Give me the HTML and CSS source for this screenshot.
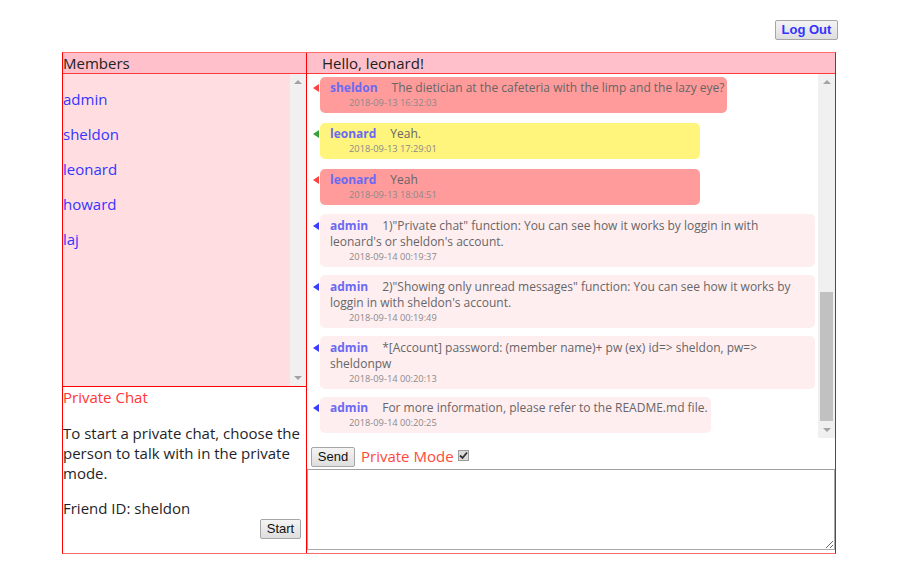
FILE: index.html
```html
<!DOCTYPE html>
<html>
<head>
<meta charset="utf-8">
<link rel="stylesheet" href="styles.css">
</head>
<body>
<div class="page">
  <div class="topbar">
    <button class="btn logout">Log Out</button>
  </div>
  <div class="frame">
    <div class="leftcol">
      <div class="colhead members-head">Members</div>
      <div class="members">
        <ul class="member-list">
          <li><a href="#">admin</a></li>
          <li><a href="#">sheldon</a></li>
          <li><a href="#">leonard</a></li>
          <li><a href="#">howard</a></li>
          <li><a href="#">laj</a></li>
        </ul>
        <div class="scrollbar">
          <span class="arr up"></span>
          <span class="arr down"></span>
        </div>
      </div>
      <div class="private">
        <div class="private-title">Private Chat</div>
        <p class="private-text">To start a private chat, choose the person to talk with in the private mode.</p>
        <div class="friend">Friend ID: sheldon</div>
        <div class="start-row"><button class="btn">Start</button></div>
      </div>
    </div>
    <div class="rightcol">
      <div class="colhead hello">Hello, leonard!</div>
      <div class="chat">
        <div class="messages">
          <div class="msg red"><div class="body"><b class="name">sheldon</b>The dietician at the cafeteria with the limp and the lazy eye?</div><div class="time">2018-09-13 16:32:03</div></div>
          <div class="msg yellow"><div class="body"><b class="name">leonard</b>Yeah.</div><div class="time">2018-09-13 17:29:01</div></div>
          <div class="msg red last"><div class="body"><b class="name">leonard</b>Yeah</div><div class="time">2018-09-13 18:04:51</div></div>
          <div class="msg admin wide"><div class="body"><b class="name">admin</b>1)"Private chat" function: You can see how it works by loggin in with<br>leonard's or sheldon's account.</div><div class="time">2018-09-14 00:19:37</div></div>
          <div class="msg admin wide"><div class="body"><b class="name">admin</b>2)"Showing only unread messages" function: You can see how it works by<br>loggin in with sheldon's account.</div><div class="time">2018-09-14 00:19:49</div></div>
          <div class="msg admin wide"><div class="body"><b class="name">admin</b>*[Account] password: (member name)+ pw (ex) id=&gt; sheldon, pw=&gt;<br>sheldonpw</div><div class="time">2018-09-14 00:20:13</div></div>
          <div class="msg admin single"><div class="body"><b class="name">admin</b>For more information, please refer to the README.md file.</div><div class="time">2018-09-14 00:20:25</div></div>
        </div>
        <div class="scrollbar chat-scroll">
          <span class="arr up"></span>
          <span class="thumb"></span>
          <span class="arr down"></span>
        </div>
      </div>
      <div class="controls">
        <button class="btn">Send</button>
        <span class="pm">Private Mode</span>
        <span class="check"><svg width="9" height="9" viewBox="0 0 9 9"><path d="M1 4.5 L3.5 7 L8 1.5" fill="none" stroke="#333" stroke-width="1.8"/></svg></span>
      </div>
      <textarea class="input"></textarea>
    </div>
  </div>
</div>
</body>
</html>
```
FILE: styles.css
```css
* { box-sizing: border-box; }
body {
  margin: 0;
  background: #fff;
  font-family: "Open Sans", "Noto Sans", sans-serif;
  color: #222;
}
.page {
  padding: 20px 0 0 62px;
  width: 837px;
}
.topbar {
  display: flex;
  justify-content: flex-end;
  height: 20px;
  margin-bottom: 12px;
}
.btn {
  font-family: "Liberation Sans", Arial, sans-serif;
  font-size: 13px;
  color: #111;
  background: linear-gradient(#f4f4f4, #dedede);
  border: 1px solid #a6a6a6;
  border-radius: 2px;
  height: 20px;
  padding: 0 6px;
  line-height: 18px;
  margin: 0;
}
.logout {
  font-weight: bold;
  color: #3333ff;
  width: 63px;
  padding: 0;
  margin-right: -1px;
}
.frame {
  display: flex;
  width: 774px;
  height: 502px;
  border: 1px solid #ff0000;
  border-top-color: #ff6b6b;
  border-bottom-color: #ff6b6b;
}
.leftcol {
  width: 244px;
  border-right: 1px solid #ff0000;
  display: flex;
  flex-direction: column;
}
.rightcol {
  flex: 1;
  display: flex;
  flex-direction: column;
}
.colhead {
  height: 21px;
  background: #ffc0cb;
  border-bottom: 1px solid #ff3b3b;
  font-size: 15px;
  line-height: 20px;
  color: #222;
}
.members-head { padding-left: 0; }
.hello { padding-left: 15px; }
.members {
  height: 313px;
  display: flex;
  background: #ffdde1;
  border-bottom: 1px solid #ff0000;
}
.member-list {
  list-style: none;
  margin: 0;
  padding: 8px 0 0 0;
  flex: 1;
}
.member-list li {
  height: 35px;
  line-height: 35px;
  font-size: 15px;
}
.member-list a {
  color: #3535ff;
  text-decoration: none;
}
.scrollbar {
  width: 16px;
  background: #f0f0f0;
  position: relative;
}
.chat-scroll { width: 17px; }
.arr {
  position: absolute;
  left: 50%;
  margin-left: -4px;
  width: 0;
  height: 0;
  border-left: 4px solid transparent;
  border-right: 4px solid transparent;
}
.arr.up {
  top: 6px;
  border-bottom: 4px solid #a3a3a3;
}
.arr.down {
  bottom: 6px;
  border-top: 4px solid #a3a3a3;
}
.thumb {
  position: absolute;
  left: 2px;
  right: 2px;
  top: 218px;
  height: 129px;
  background: #c1c1c1;
}
.private {
  flex: 1;
  padding: 0 5px 0 0;
  font-size: 15px;
  line-height: 20px;
}
.private-title {
  color: #ff3636;
}
.private-text {
  margin: 16px 0 0;
  color: #1f1f2a;
}
.friend {
  margin-top: 15px;
  color: #1f1f2a;
}
.start-row {
  display: flex;
  justify-content: flex-end;
  margin-top: 1px;
}
.start-row .btn { width: 41px; padding: 0; }
.chat {
  height: 364px;
  display: flex;
  background: #fff;
}
.messages {
  flex: 1;
  overflow: hidden;
  padding: 3px 0 0 13px;
  display: flex;
  flex-direction: column;
  align-items: flex-start;
}
.msg {
  position: relative;
  min-width: 380px;
  max-width: 495px;
  padding: 3px 3px 3px 10px;
  border-radius: 5px;
  font-size: 12px;
  line-height: 16px;
  color: #666;
  margin-bottom: 10px;
}
.msg.wide { width: 495px; }
.msg::before {
  content: "";
  position: absolute;
  left: -7px;
  top: 7px;
  border-top: 4px solid transparent;
  border-bottom: 4px solid transparent;
  border-right: 6px solid #ff4040;
}
.msg.red { background: #ff9b9b; }
.msg.red.last { margin-bottom: 9px; }
.msg.yellow { background: #fff57d; }
.msg.yellow::before { border-right-color: #3aa03a; }
.msg.admin {
  background: #ffeef0;
  padding-top: 4px;
  margin-bottom: 8px;
}
.msg.admin::before { border-right-color: #3c3cff; top: 8px; }
.msg.admin.single { padding-top: 3px; }
.msg.admin.single::before { top: 7px; }
.name {
  font-weight: bold;
  color: #6a6af2;
  margin-right: 14px;
}
.time {
  font-size: 9.3px;
  line-height: 14px;
  color: #8a8a8a;
  padding-left: 19px;
}
.controls {
  height: 31px;
  padding: 9px 0 0 4px;
  display: flex;
  align-items: flex-start;
}
.controls .btn { width: 44px; padding: 0; }
.pm {
  color: #ff4a3a;
  font-size: 15px;
  line-height: 19px;
  margin-left: 6px;
}
.check {
  width: 11px;
  height: 11px;
  margin: 3px 0 0 4px;
  border: 1px solid #9a9a9a;
  background: #dcdcdc;
  display: flex;
  align-items: center;
  justify-content: center;
}
.input {
  display: block;
  width: 528px;
  height: 81px;
  margin: 0;
  border: 1px solid #a9a9a9;
  border-top-color: #a0a0a0;
  resize: vertical;
  font-family: inherit;
}
```
